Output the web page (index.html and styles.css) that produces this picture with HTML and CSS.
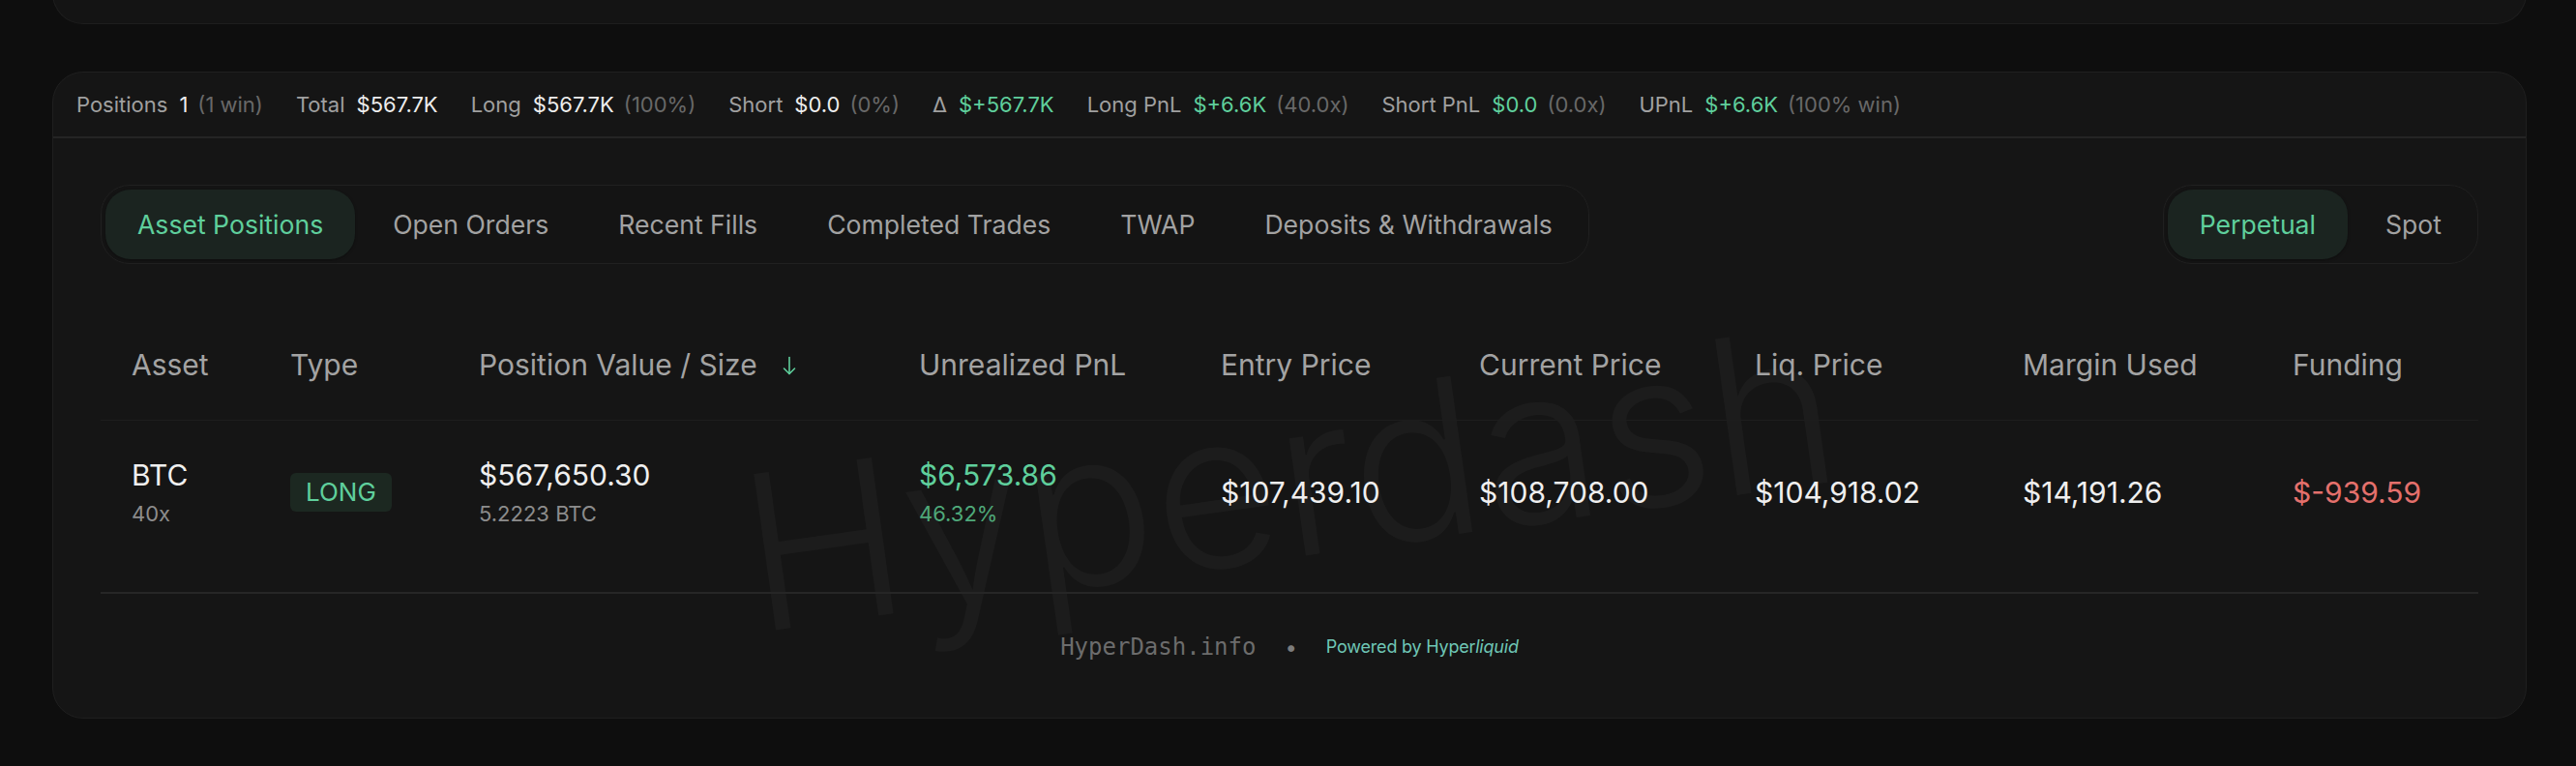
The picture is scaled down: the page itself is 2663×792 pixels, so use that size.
FILE: index.html
```html
<!DOCTYPE html>
<html lang="en">
<head>
<meta charset="utf-8">
<title>HyperDash – Positions</title>
<link rel="stylesheet" href="styles.css">
</head>
<body>
<div class="page">
  <div class="top-card"></div>
  <section class="card">
    <div class="watermark">Hyperdash</div>
    <div class="stats">
      <div class="stat"><span class="lbl">Positions</span><span class="val">1</span><span class="dim">(1 win)</span></div>
      <div class="stat"><span class="lbl">Total</span><span class="val">$567.7K</span></div>
      <div class="stat"><span class="lbl">Long</span><span class="val">$567.7K</span><span class="dim">(100%)</span></div>
      <div class="stat"><span class="lbl">Short</span><span class="val">$0.0</span><span class="dim">(0%)</span></div>
      <div class="stat"><span class="lbl">Δ</span><span class="val pos">$+567.7K</span></div>
      <div class="stat"><span class="lbl">Long PnL</span><span class="val pos">$+6.6K</span><span class="dim">(40.0x)</span></div>
      <div class="stat"><span class="lbl">Short PnL</span><span class="val pos">$0.0</span><span class="dim">(0.0x)</span></div>
      <div class="stat"><span class="lbl">UPnL</span><span class="val pos">$+6.6K</span><span class="dim">(100% win)</span></div>
    </div>
    <div class="content">
      <div class="toolbar">
        <div class="seg">
          <span class="seg-item active">Asset Positions</span>
          <span class="seg-item">Open Orders</span>
          <span class="seg-item">Recent Fills</span>
          <span class="seg-item">Completed Trades</span>
          <span class="seg-item">TWAP</span>
          <span class="seg-item">Deposits &amp; Withdrawals</span>
        </div>
        <div class="seg">
          <span class="seg-item active">Perpetual</span>
          <span class="seg-item">Spot</span>
        </div>
      </div>
      <table class="positions">
        <colgroup>
          <col class="c-asset"><col class="c-type"><col class="c-pos"><col class="c-upnl"><col class="c-entry"><col class="c-cur"><col class="c-liq"><col class="c-margin"><col class="c-fund">
        </colgroup>
        <thead>
          <tr>
            <th>Asset</th>
            <th>Type</th>
            <th><span class="sort">Position Value / Size<svg class="sort-icon" width="14" height="20" viewBox="0 0 14 20" fill="none" stroke="currentColor" stroke-width="1.6" stroke-linecap="round" stroke-linejoin="round"><path d="M7 1.5V18.5"/><path d="M1.5 13L7 18.5L12.5 13"/></svg></span></th>
            <th>Unrealized PnL</th>
            <th>Entry Price</th>
            <th>Current Price</th>
            <th>Liq. Price</th>
            <th>Margin Used</th>
            <th>Funding</th>
          </tr>
        </thead>
        <tbody>
          <tr>
            <td><div class="main">BTC</div><div class="sub">40x</div></td>
            <td><span class="badge">LONG</span></td>
            <td><div class="main">$567,650.30</div><div class="sub">5.2223 BTC</div></td>
            <td><div class="main main-pos">$6,573.86</div><div class="sub sub-pos">46.32%</div></td>
            <td><span class="single">$107,439.10</span></td>
            <td><span class="single">$108,708.00</span></td>
            <td><span class="single">$104,918.02</span></td>
            <td><span class="single">$14,191.26</span></td>
            <td><span class="single single-neg">$-939.59</span></td>
          </tr>
        </tbody>
      </table>
      <footer class="footer">
        <span class="site">HyperDash.info</span>
        <span class="dot">•</span>
        <span class="powered">Powered by Hyper<em>liquid</em></span>
      </footer>
    </div>
  </section>
</div>
</body>
</html>
```

FILE: styles.css
```css
* { box-sizing: border-box; }

html, body {
  margin: 0;
  padding: 0;
  background: #0e0e0e;
}

body {
  font-family: Inter, "Noto Sans", "Liberation Sans", sans-serif;
  color: #e8e8e8;
  overflow: hidden;
}

.page {
  padding: 0 51px 0 54px;
}

.top-card {
  height: 57px;
  margin-top: -32px;
  background: #141414;
  border: 1px solid #1e1e1e;
  border-top: none;
  border-radius: 0 0 32px 32px;
}

.card {
  position: relative;
  margin-top: 49px;
  background: #151515;
  border: 1px solid #1f1f1f;
  border-radius: 32px;
  overflow: hidden;
}

.watermark {
  position: absolute;
  left: 50%;
  top: 420px;
  transform: translate(-50%, -50%) rotate(-8deg);
  font-size: 224px;
  font-weight: 300;
  line-height: 1;
  color: rgba(255, 255, 255, 0.03);
  white-space: nowrap;
  pointer-events: none;
  z-index: 0;
}

.stats {
  position: relative;
  z-index: 1;
  height: 68px;
  display: flex;
  align-items: center;
  gap: 34px;
  padding: 0 24px;
  border-bottom: 2px solid #242424;
  font-size: 22px;
}

.stat {
  display: flex;
  align-items: baseline;
  gap: 10px;
  white-space: nowrap;
}

.stat .lbl { color: #a0a0a0; margin-right: 2px; }
.stat .val { color: #ededed; }
.stat .val.pos { color: #5fcf9c; }
.stat .dim { color: #686868; }

.content {
  position: relative;
  z-index: 1;
  padding: 48px 49px 0;
}

.toolbar {
  display: flex;
  justify-content: space-between;
  align-items: center;
  margin-bottom: 40px;
}

.seg {
  display: flex;
  align-items: center;
  gap: 6px;
  height: 82px;
  padding: 4px;
  border: 1px solid #202020;
  border-radius: 30px;
  background: #141414;
}

.seg-item {
  display: flex;
  align-items: center;
  height: 72px;
  padding: 0 33px;
  border-radius: 26px;
  font-size: 26.6px;
  color: #a2a2a2;
  white-space: nowrap;
}

.seg-item.active {
  background: #1b2420;
  color: #5fcf9c;
  box-shadow: 0 1px 3px rgba(0, 0, 0, 0.35);
}

.positions {
  width: 100%;
  table-layout: fixed;
  border-collapse: collapse;
  margin-bottom: 30px;
}

.c-asset { width: 164px; }
.c-type { width: 195px; }
.c-pos { width: 455px; }
.c-upnl { width: 312px; }
.c-entry { width: 267px; }
.c-cur { width: 285px; }
.c-liq { width: 277px; }
.c-margin { width: 279px; }
.c-fund { width: auto; }

.positions th {
  text-align: left;
  font-weight: 400;
  font-size: 30px;
  line-height: 44px;
  color: #a3a3a3;
  padding: 42px 0 35px 32px;
  border-bottom: 1px solid #1d1d1d;
  white-space: nowrap;
}

.sort {
  display: inline-flex;
  align-items: center;
  gap: 26px;
}

.sort-icon {
  color: #5fcf9c;
  margin-top: 2px;
}

.positions td {
  padding: 36px 0 36px 32px;
  vertical-align: middle;
  white-space: nowrap;
}

.main {
  font-size: 30px;
  line-height: 40px;
  color: #efefef;
}

.main.main-pos { color: #5fcf9c; }

.sub {
  margin-top: 6px;
  font-size: 22px;
  line-height: 29px;
  color: #8c8c8c;
}

.sub.sub-pos { color: #4fa97a; }

.single {
  font-size: 30px;
  line-height: 40px;
  color: #efefef;
}

.single.single-neg { color: #e4706c; }

.badge {
  display: inline-block;
  height: 40px;
  line-height: 40px;
  padding: 0 16px;
  border-radius: 6px;
  background: #1c2821;
  color: #5fcf9c;
  font-size: 26px;
}

.footer {
  display: flex;
  justify-content: center;
  align-items: center;
  gap: 30px;
  padding: 40px 0 58px;
  border-top: 2px solid #262626;
  line-height: 30px;
}

.site {
  font-family: "DejaVu Sans Mono", "Liberation Mono", monospace;
  font-size: 24px;
  color: #6c6c6c;
}

.dot {
  font-size: 22px;
  color: #7c7c7c;
}

.powered {
  font-size: 18px;
  color: #6fc7b6;
  letter-spacing: -0.2px;
}

.powered em {
  font-style: italic;
}
```
